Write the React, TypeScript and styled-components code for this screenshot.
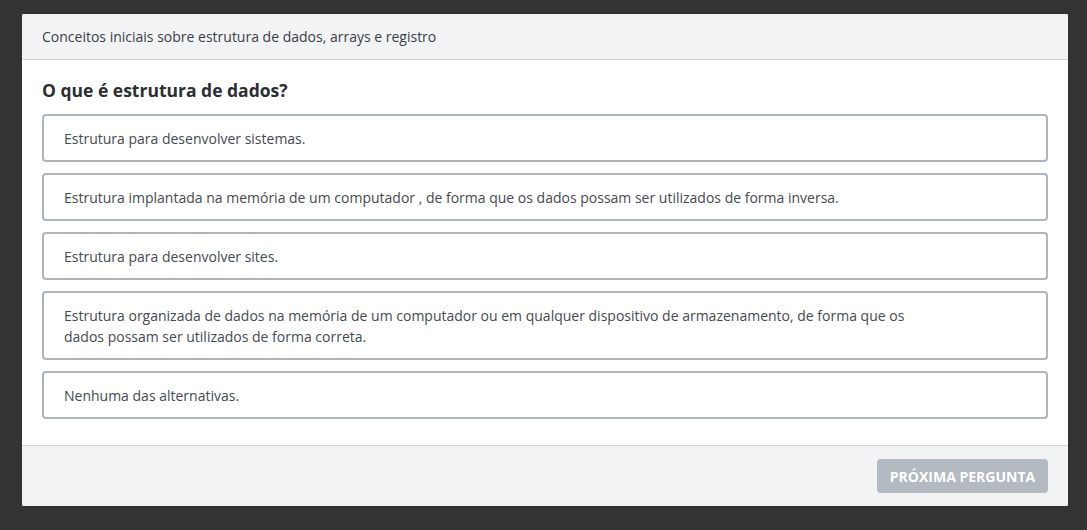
import styled, { createGlobalStyle } from "styled-components";

const GlobalStyle = createGlobalStyle`
  html, body {
    margin: 0;
    padding: 0;
    background: #333333;
    font-family: "Open Sans", "Noto Sans", sans-serif;
  }
`;

const Screen = styled.div`
  width: 1087px;
  height: 530px;
  padding: 14px 19px 24px 22px;
  box-sizing: border-box;
`;

const Modal = styled.div`
  width: 1046px;
  height: 492px;
  background: #ffffff;
  border-radius: 2px;
  display: flex;
  flex-direction: column;
  overflow: hidden;
`;

const Header = styled.div`
  height: 45px;
  background: #f2f3f5;
  border-bottom: 1px solid #d3d6da;
  display: flex;
  align-items: center;
  padding: 0 20px;
  font-size: 14px;
  color: #3a3f45;
`;

const Body = styled.div`
  flex: 1;
  padding: 18px 20px 0 20px;
  display: flex;
  flex-direction: column;
`;

const Question = styled.h2`
  margin: 0 0 12px 0;
  font-size: 17.5px;
  font-weight: 700;
  color: #2b2f33;
  line-height: 24px;
`;

const Options = styled.div`
  display: flex;
  flex-direction: column;
  gap: 11px;
`;

const Option = styled.div`
  border: 2px solid #aeb5bd;
  border-radius: 4px;
  padding: 12px 20px 11px 20px;
  font-size: 14px;
  line-height: 21px;
  color: #454a50;
  cursor: pointer;
`;

const OptionText = styled.span`
  display: block;
  max-width: 860px;
`;

const Footer = styled.div`
  height: 60px;
  background: #f2f3f5;
  border-top: 1px solid #d3d6da;
  display: flex;
  align-items: center;
  justify-content: flex-end;
  padding: 0 20px;
`;

const NextButton = styled.button`
  width: 171px;
  height: 34px;
  border: none;
  border-radius: 4px;
  background: #b3bac2;
  color: #ffffff;
  font-family: "Open Sans", "Noto Sans", sans-serif;
  font-size: 14px;
  font-weight: 700;
  text-transform: uppercase;
  padding: 0;
  cursor: not-allowed;
`;

const alternativas = [
  "Estrutura para desenvolver sistemas.",
  "Estrutura implantada na memória de um computador , de forma que os dados possam ser utilizados de forma inversa.",
  "Estrutura para desenvolver sites.",
  "Estrutura organizada de dados na memória de um computador ou em qualquer dispositivo de armazenamento, de forma que os dados possam ser utilizados de forma correta.",
  "Nenhuma das alternativas.",
];

function App() {
  return (
    <>
      <GlobalStyle />
      <Screen>
        <Modal>
          <Header>Conceitos iniciais sobre estrutura de dados, arrays e registro</Header>
          <Body>
            <Question>O que é estrutura de dados?</Question>
            <Options>
              {alternativas.map((texto) => (
                <Option key={texto}>
                  <OptionText>{texto}</OptionText>
                </Option>
              ))}
            </Options>
          </Body>
          <Footer>
            <NextButton disabled>Próxima pergunta</NextButton>
          </Footer>
        </Modal>
      </Screen>
    </>
  );
}

export default App;
